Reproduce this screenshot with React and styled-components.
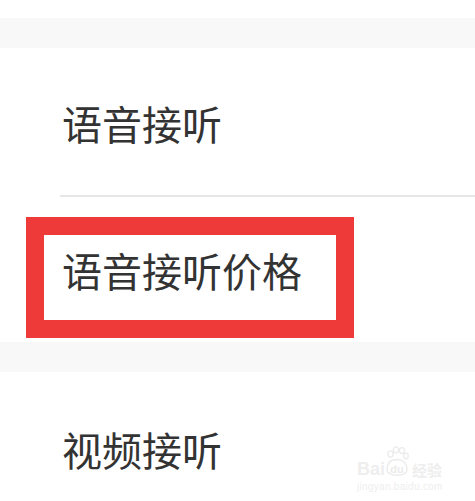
import React from 'react';
import styled, { createGlobalStyle } from 'styled-components';

const GlobalStyle = createGlobalStyle`
  html, body {
    margin: 0;
    padding: 0;
    background: #ffffff;
  }
  body {
    font-family: 'Noto Sans CJK SC', 'Noto Sans', sans-serif;
  }
`;

const Page = styled.div`
  position: relative;
  width: 475px;
  height: 501px;
  overflow: hidden;
  background: #ffffff;
  padding-top: 18px;
  box-sizing: border-box;
`;

const Gap = styled.div`
  height: 30px;
  background: #f8f8f8;
`;

const Row = styled.div`
  position: relative;
  height: ${(props) => props.height}px;
  display: flex;
  align-items: center;
  padding-left: 62px;
  padding-top: ${(props) => props.shift || 0}px;
  box-sizing: border-box;
  font-size: 40px;
  line-height: 1;
  color: #333333;
`;

const Divider = styled.div`
  height: 2px;
  margin-left: 60px;
  background: #e6e6e6;
`;

const Highlight = styled.div`
  position: absolute;
  left: 26px;
  top: 20px;
  width: 328px;
  height: 121px;
  border: 18px solid #ef3a3a;
  box-sizing: border-box;
`;

const Watermark = styled.div`
  position: absolute;
  left: 357px;
  top: 446px;
  display: flex;
  flex-direction: column;
  align-items: flex-start;
  color: #eeeeee;
  font-family: 'Liberation Sans', Arial, sans-serif;
`;

const BrandLine = styled.div`
  display: flex;
  align-items: flex-end;
  font-size: 18px;
  line-height: 1;
  font-weight: bold;
`;

const BrandCn = styled.span`
  font-family: 'Noto Sans CJK SC', sans-serif;
  font-size: 15px;
  line-height: 1;
  margin-left: 3px;
  margin-bottom: 1px;
`;

const BrandUrl = styled.div`
  font-size: 10px;
  margin-top: 3px;
  letter-spacing: 0.3px;
`;

const Paw = () => (
  <svg width="24" height="32" viewBox="0 0 24 32" fill="none" stroke="#ebebeb" strokeWidth="1.3">
    <ellipse cx="5.5" cy="8" rx="2.6" ry="3.2" />
    <ellipse cx="11" cy="3.8" rx="2.6" ry="3" />
    <ellipse cx="17" cy="4.6" rx="2.6" ry="3" />
    <ellipse cx="21" cy="10" rx="2.2" ry="2.8" />
    <path d="M2 24 C2 17 6 13.5 12 13.5 C18 13.5 22 17 22 24 C22 31 2 31 2 24 Z" />
    <text x="12" y="27" textAnchor="middle" fontFamily="Liberation Sans, Arial, sans-serif" fontSize="11" fontWeight="bold" fill="#ebebeb" stroke="none">du</text>
  </svg>
);

const App = () => {
  return (
    <Page>
      <GlobalStyle />
      <Gap />
      <Row height={147} shift={3}>语音接听</Row>
      <Divider />
      <Row height={145} shift={1}>
        语音接听价格
        <Highlight />
      </Row>
      <Gap />
      <Row height={150} shift={3}>视频接听</Row>
      <Watermark>
        <BrandLine>
          <span>Bai</span>
          <Paw />
          <BrandCn>经验</BrandCn>
        </BrandLine>
        <BrandUrl>jingyan.baidu.com</BrandUrl>
      </Watermark>
    </Page>
  );
};

export default App;
